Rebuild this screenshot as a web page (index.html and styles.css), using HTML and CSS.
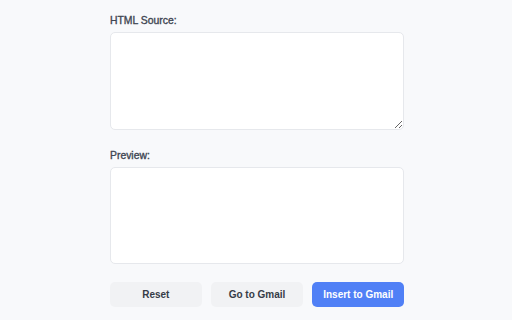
FILE: index.html
```html
<!DOCTYPE html>
<html>
<head>
<meta charset="utf-8">
<link rel="stylesheet" href="styles.css">
</head>
<body>
<main class="panel">
  <label class="label" for="src">HTML Source:</label>
  <textarea id="src" class="source"></textarea>
  <div class="label preview-label">Preview:</div>
  <div class="preview"></div>
  <div class="actions">
    <button class="btn">Reset</button>
    <button class="btn">Go to Gmail</button>
    <button class="btn primary">Insert to Gmail</button>
  </div>
</main>
</body>
</html>
```
FILE: styles.css
```css
html, body {
  margin: 0;
  background: #f8f9fb;
}
body {
  padding: 13.7px 0 0 2px;
  font-family: "Liberation Sans", Arial, sans-serif;
}
.panel {
  width: 294px;
  margin: 0 auto;
  display: flex;
  flex-direction: column;
}
.label {
  display: block;
  font-size: 10.4px;
  line-height: 14px;
  color: #3f4652;
  margin-bottom: 4.6px;
  -webkit-text-stroke: 0.35px #3f4652;
}
.source {
  display: block;
  box-sizing: border-box;
  width: 100%;
  height: 97.6px;
  margin: 0;
  border: 1px solid #e6e8ec;
  border-radius: 5px;
  background: #ffffff;
  resize: vertical;
  outline: none;
}
.preview-label {
  margin-top: 19px;
  margin-bottom: 4px;
}
.preview {
  box-sizing: border-box;
  height: 97.3px;
  border: 1px solid #e6e8ec;
  border-radius: 5px;
  background: #ffffff;
}
.actions {
  margin-top: 17.7px;
  display: flex;
  gap: 9.6px;
}
.btn {
  flex: 1;
  height: 25px;
  border: none;
  border-radius: 5px;
  background: #f1f2f4;
  color: #363c47;
  font-family: "Liberation Sans", Arial, sans-serif;
  font-weight: bold;
  font-size: 10px;
  padding: 0;
}
.btn.primary {
  background: #5080f6;
  color: #ffffff;
}
```
